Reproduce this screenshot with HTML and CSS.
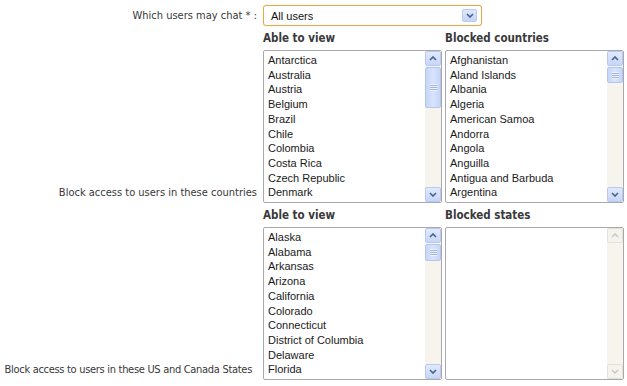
FILE: index.html
```html
<!DOCTYPE html>
<html>
<head>
<meta charset="utf-8">
<link rel="stylesheet" href="styles.css">
</head>
<body>
<div class="form">
  <label class="lbl lbl-mid">Which users may chat * :</label>
  <div class="select">
    <span class="select-text">All users</span>
    <span class="dd-btn"><svg width="8" height="5" viewBox="0 0 8 5"><polyline points="1,1 4,4 7,1" fill="none" stroke="#4a5f8a" stroke-width="1.6"/></svg></span>
  </div>

  <label class="lbl lbl-end">Block access to users in these countries</label>
  <div class="pair">
    <div class="col">
      <h4 class="head">Able to view</h4>
      <div class="list">
        <div class="items">
          <div>Antarctica</div><div>Australia</div><div>Austria</div><div>Belgium</div><div>Brazil</div><div>Chile</div><div>Colombia</div><div>Costa Rica</div><div>Czech Republic</div><div>Denmark</div>
        </div>
        <div class="sb">
          <div class="sb-btn"><svg width="8" height="5" viewBox="0 0 8 5"><polyline points="1,4 4,1 7,4" fill="none" stroke="#4a5f8a" stroke-width="1.6"/></svg></div>
          <div class="sb-track"><div class="sb-thumb thumb-41"><span class="grip"></span></div></div>
          <div class="sb-btn"><svg width="8" height="5" viewBox="0 0 8 5"><polyline points="1,1 4,4 7,1" fill="none" stroke="#4a5f8a" stroke-width="1.6"/></svg></div>
        </div>
      </div>
    </div>
    <div class="col">
      <h4 class="head">Blocked countries</h4>
      <div class="list">
        <div class="items">
          <div>Afghanistan</div><div>Aland Islands</div><div>Albania</div><div>Algeria</div><div>American Samoa</div><div>Andorra</div><div>Angola</div><div>Anguilla</div><div>Antigua and Barbuda</div><div>Argentina</div>
        </div>
        <div class="sb">
          <div class="sb-btn"><svg width="8" height="5" viewBox="0 0 8 5"><polyline points="1,4 4,1 7,4" fill="none" stroke="#4a5f8a" stroke-width="1.6"/></svg></div>
          <div class="sb-track"><div class="sb-thumb thumb-16"><span class="grip"></span></div></div>
          <div class="sb-btn"><svg width="8" height="5" viewBox="0 0 8 5"><polyline points="1,1 4,4 7,1" fill="none" stroke="#4a5f8a" stroke-width="1.6"/></svg></div>
        </div>
      </div>
    </div>
  </div>

  <label class="lbl lbl-end lbl-long">Block access to users in these US and Canada States</label>
  <div class="pair">
    <div class="col">
      <h4 class="head">Able to view</h4>
      <div class="list">
        <div class="items">
          <div>Alaska</div><div>Alabama</div><div>Arkansas</div><div>Arizona</div><div>California</div><div>Colorado</div><div>Connecticut</div><div>District of Columbia</div><div>Delaware</div><div>Florida</div>
        </div>
        <div class="sb">
          <div class="sb-btn"><svg width="8" height="5" viewBox="0 0 8 5"><polyline points="1,4 4,1 7,4" fill="none" stroke="#4a5f8a" stroke-width="1.6"/></svg></div>
          <div class="sb-track"><div class="sb-thumb thumb-17"><span class="grip"></span></div></div>
          <div class="sb-btn"><svg width="8" height="5" viewBox="0 0 8 5"><polyline points="1,1 4,4 7,1" fill="none" stroke="#4a5f8a" stroke-width="1.6"/></svg></div>
        </div>
      </div>
    </div>
    <div class="col">
      <h4 class="head">Blocked states</h4>
      <div class="list">
        <div class="items"></div>
        <div class="sb sb-disabled">
          <div class="sb-btn"><svg width="8" height="5" viewBox="0 0 8 5"><polyline points="1,4 4,1 7,4" fill="none" stroke="#c8c6bb" stroke-width="1.4"/></svg></div>
          <div class="sb-track"></div>
          <div class="sb-btn"><svg width="8" height="5" viewBox="0 0 8 5"><polyline points="1,1 4,4 7,1" fill="none" stroke="#c8c6bb" stroke-width="1.4"/></svg></div>
        </div>
      </div>
    </div>
  </div>
</div>
</body>
</html>
```

FILE: styles.css
```css
html, body {
  margin: 0;
  padding: 0;
  background: #ffffff;
}

.form {
  display: grid;
  grid-template-columns: 257px 360px;
  column-gap: 6px;
  row-gap: 4px;
  padding-top: 5px;
  font-family: "DejaVu Sans Condensed", "DejaVu Sans", sans-serif;
}

.lbl {
  font-size: 11px;
  color: #383838;
  text-align: right;
  white-space: nowrap;
  line-height: 14px;
}

.lbl-mid {
  align-self: center;
}

.lbl-end {
  align-self: end;
  padding-bottom: 3px;
}

.lbl-long {
  letter-spacing: -0.3px;
  padding-right: 5px;
}

.select {
  width: 219px;
  height: 21px;
  box-sizing: border-box;
  border: 1px solid #e3aa4c;
  border-radius: 3px;
  box-shadow: 0 0 1px #f3cd8a;
  display: flex;
  align-items: center;
  justify-content: space-between;
  padding: 0 4px 0 7px;
  background: #fff;
}

.select-text {
  font-family: "Liberation Sans", Arial, sans-serif;
  font-size: 11px;
  color: #111;
}

.dd-btn {
  width: 15px;
  height: 13px;
  box-sizing: border-box;
  border: 1px solid #bccbf0;
  border-radius: 2px;
  background: linear-gradient(#dde7fd, #c4d4f8);
  display: flex;
  align-items: center;
  justify-content: center;
}

.pair {
  display: grid;
  grid-template-columns: 179px 179px;
  column-gap: 3px;
}

.col {
  display: flex;
  flex-direction: column;
  gap: 4px;
}

.head {
  margin: 0;
  height: 16px;
  line-height: 16px;
  font-size: 11.5px;
  font-weight: bold;
  color: #3a3a3a;
}

.list {
  height: 153px;
  box-sizing: border-box;
  border: 1px solid #a9a9ad;
  border-radius: 2px;
  display: flex;
  overflow: hidden;
  background: #fff;
}

.items {
  flex: 1;
  padding: 2px 4px;
  font-family: "Liberation Sans", Arial, sans-serif;
  font-size: 11px;
  line-height: 14.7px;
  color: #1a1a1a;
  white-space: nowrap;
  overflow: hidden;
}

.sb {
  width: 16px;
  display: flex;
  flex-direction: column;
  background: #f6f4ec;
}

.sb-btn {
  height: 15px;
  box-sizing: border-box;
  border: 1px solid #b9c9ef;
  border-radius: 2px;
  background: linear-gradient(#e0e9fd, #c6d6f9);
  display: flex;
  align-items: center;
  justify-content: center;
}

.sb-track {
  flex: 1;
  padding-top: 1px;
}

.sb-thumb {
  box-sizing: border-box;
  border: 1px solid #b4c6ee;
  border-radius: 2px;
  background: linear-gradient(90deg, #c6d6f9, #d8e3fc 50%, #c6d6f9);
  display: flex;
  align-items: center;
  justify-content: center;
}

.thumb-41 { height: 41px; }
.thumb-16 { height: 16px; }
.thumb-17 { height: 17px; }

.grip {
  width: 7px;
  height: 7px;
  background: repeating-linear-gradient(#eef3fe 0 1px, #9fb4e4 1px 2px);
}

.sb-disabled .sb-btn {
  border-color: #e4e2d8;
  background: #f4f3ee;
}
```
